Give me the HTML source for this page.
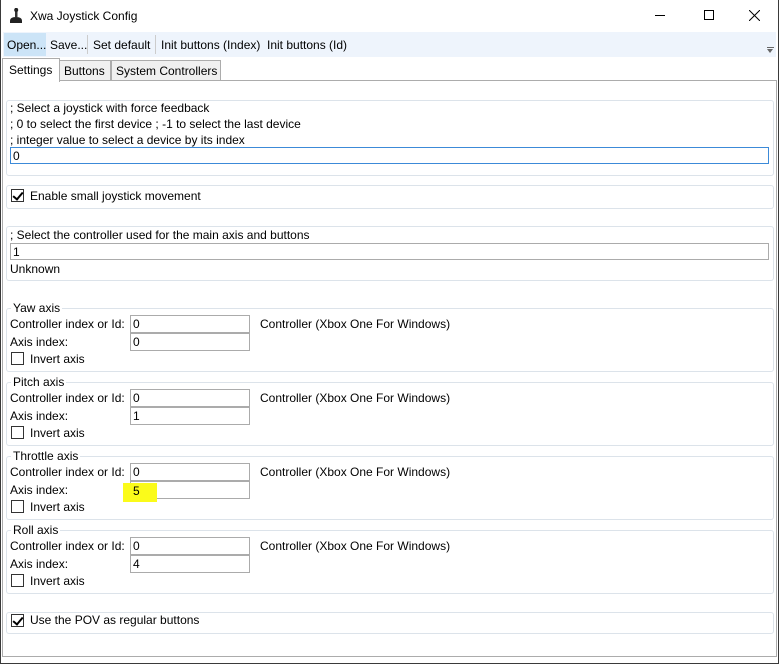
<!DOCTYPE html>
<html><head><style>
*{box-sizing:border-box;margin:0;padding:0}
body{width:779px;height:664px;position:relative;overflow:hidden;background:#fff;font-family:"Liberation Sans",sans-serif;font-size:12px;color:#000}
.a{position:absolute}
.t{position:absolute;white-space:nowrap;line-height:14px}
.in{position:absolute;border:1px solid #ababab;background:#fff;height:18px;padding-left:2px;line-height:16px}
.pan{position:absolute;border:1px solid #dce3ea;border-radius:3px}
.cb{position:absolute;width:13px;height:13px;border:1px solid #333;background:#fff}
.ck::after{content:"";position:absolute;left:3px;top:0px;width:4px;height:8px;border:solid #000;border-width:0 2px 2px 0;transform:rotate(40deg)}
.leg{position:absolute;background:#fff;padding:0 2px;line-height:14px}
</style></head><body>
<div class="a" style="left:0;top:0;width:779px;height:664px;border:1px solid #3a3a3a;border-top:none"></div>
<!-- title -->
<svg class="a" style="left:9px;top:8px" width="14" height="16" viewBox="0 0 14 16"><rect x="6" y="0" width="2.5" height="9" fill="#333"/><circle cx="7.2" cy="2" r="2" fill="#222"/><path d="M1 13 Q1 9 7 9 Q13 9 13 13 L13 15 L1 15Z" fill="#222"/></svg>
<div class="t" style="left:30px;top:9px;font-size:12px">Xwa Joystick Config</div>
<div class="a" style="left:655px;top:15px;width:10px;height:1px;background:#000"></div>
<div class="a" style="left:704px;top:10px;width:10px;height:10px;border:1px solid #000"></div>
<svg class="a" style="left:749px;top:10px" width="11" height="11"><path d="M0 0L11 11M11 0L0 11" stroke="#000" stroke-width="1"/></svg>
<!-- toolbar -->
<div class="a" style="left:3px;top:32px;width:773px;height:25px;background:#eef4fc"></div>
<div class="a" style="left:4px;top:33px;width:42px;height:23px;background:#cce4f7"></div>
<div class="t" style="left:7px;top:38px">Open...</div>
<div class="t" style="left:50px;top:38px">Save...</div>
<div class="a" style="left:87px;top:35px;width:1px;height:19px;background:#ccc"></div>
<div class="t" style="left:93px;top:38px">Set default</div>
<div class="a" style="left:155px;top:35px;width:1px;height:19px;background:#ccc"></div>
<div class="t" style="left:161px;top:38px">Init buttons (Index)</div>
<div class="t" style="left:267px;top:38px">Init buttons (Id)</div>
<div class="a" style="left:767px;top:47px;width:7px;height:1px;background:#666"></div>
<div class="a" style="left:767px;top:49px;width:0;height:0;border-left:3.5px solid transparent;border-right:3.5px solid transparent;border-top:4px solid #666"></div>
<!-- tabs -->
<div class="a" style="left:2px;top:80px;width:775px;height:577px;border:1px solid #acacac"></div>
<div class="a" style="left:59px;top:60px;width:52px;height:21px;border:1px solid #acacac;background:#f0f0f0"></div>
<div class="t" style="left:64px;top:64px">Buttons</div>
<div class="a" style="left:111px;top:60px;width:110px;height:21px;border:1px solid #acacac;background:#f0f0f0"></div>
<div class="t" style="left:116px;top:64px">System Controllers</div>
<div class="a" style="left:2px;top:58px;width:58px;height:24px;border:1px solid #acacac;border-bottom:none;background:#fff"></div>
<div class="t" style="left:9px;top:63px">Settings</div>
<!-- panel 1 -->
<div class="pan" style="left:6px;top:100px;width:768px;height:76px"></div>
<div class="t" style="left:10px;top:101px">; Select a joystick with force feedback</div>
<div class="t" style="left:10px;top:117px">; 0 to select the first device ; -1 to select the last device</div>
<div class="t" style="left:10px;top:133px">; integer value to select a device by its index</div>
<div class="in" style="left:10px;top:147px;width:759px;height:17px;border-color:#3c8ad8">0</div>
<!-- panel 2 -->
<div class="pan" style="left:6px;top:185px;width:768px;height:24px"></div>
<div class="cb ck" style="left:11px;top:189px"></div>
<div class="t" style="left:30px;top:189px">Enable small joystick movement</div>
<!-- panel 3 -->
<div class="pan" style="left:6px;top:226px;width:768px;height:55px"></div>
<div class="t" style="left:10px;top:228px">; Select the controller used for the main axis and buttons</div>
<div class="in" style="left:10px;top:243px;width:759px;height:17px">1</div>
<div class="t" style="left:10px;top:262px">Unknown</div>
<!-- groups -->
<div class="pan" style="left:6px;top:308px;width:768px;height:64px"></div>
<div class="leg" style="left:11px;top:301px">Yaw axis</div>
<div class="t" style="left:10px;top:317px">Controller index or Id:</div>
<div class="in" style="left:130px;top:315px;width:120px">0</div>
<div class="t" style="left:260px;top:317px">Controller (Xbox One For Windows)</div>
<div class="t" style="left:10px;top:335px">Axis index:</div>
<div class="in" style="left:130px;top:333px;width:120px">0</div>
<div class="cb" style="left:11px;top:352px"></div>
<div class="t" style="left:30px;top:352px">Invert axis</div>

<div class="pan" style="left:6px;top:382px;width:768px;height:64px"></div>
<div class="leg" style="left:11px;top:375px">Pitch axis</div>
<div class="t" style="left:10px;top:391px">Controller index or Id:</div>
<div class="in" style="left:130px;top:389px;width:120px">0</div>
<div class="t" style="left:260px;top:391px">Controller (Xbox One For Windows)</div>
<div class="t" style="left:10px;top:409px">Axis index:</div>
<div class="in" style="left:130px;top:407px;width:120px">1</div>
<div class="cb" style="left:11px;top:426px"></div>
<div class="t" style="left:30px;top:426px">Invert axis</div>

<div class="pan" style="left:6px;top:456px;width:768px;height:64px"></div>
<div class="leg" style="left:11px;top:449px">Throttle axis</div>
<div class="t" style="left:10px;top:465px">Controller index or Id:</div>
<div class="in" style="left:130px;top:463px;width:120px">0</div>
<div class="t" style="left:260px;top:465px">Controller (Xbox One For Windows)</div>
<div class="t" style="left:10px;top:483px">Axis index:</div>
<div class="in" style="left:130px;top:481px;width:120px"></div>
<div class="a" style="left:123px;top:483px;width:34px;height:19px;background:#fbfb1a"></div>
<div class="t" style="left:133px;top:484px">5</div>
<div class="cb" style="left:11px;top:500px"></div>
<div class="t" style="left:30px;top:500px">Invert axis</div>

<div class="pan" style="left:6px;top:530px;width:768px;height:64px"></div>
<div class="leg" style="left:11px;top:523px">Roll axis</div>
<div class="t" style="left:10px;top:539px">Controller index or Id:</div>
<div class="in" style="left:130px;top:537px;width:120px">0</div>
<div class="t" style="left:260px;top:539px">Controller (Xbox One For Windows)</div>
<div class="t" style="left:10px;top:557px">Axis index:</div>
<div class="in" style="left:130px;top:555px;width:120px">4</div>
<div class="cb" style="left:11px;top:574px"></div>
<div class="t" style="left:30px;top:574px">Invert axis</div>

<div class="pan" style="left:6px;top:612px;width:768px;height:22px"></div>
<div class="cb ck" style="left:11px;top:614px"></div>
<div class="t" style="left:30px;top:613px">Use the POV as regular buttons</div>
</body></html>
